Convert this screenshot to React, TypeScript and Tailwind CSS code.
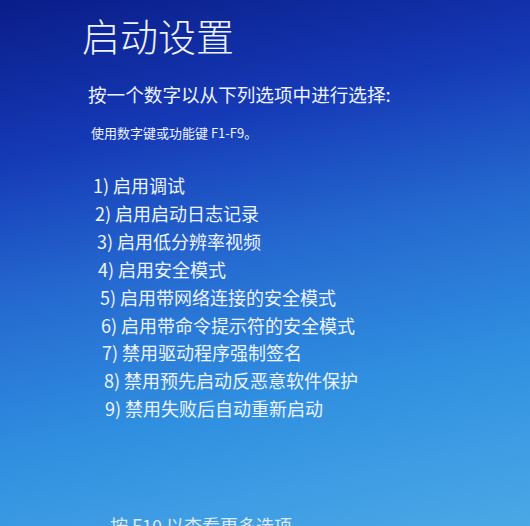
const options = [
  { label: '1) 启用调试', indent: 'ml-[93px]' },
  { label: '2) 启用启动日志记录', indent: 'ml-[95px]' },
  { label: '3) 启用低分辨率视频', indent: 'ml-[97px]' },
  { label: '4) 启用安全模式', indent: 'ml-[98px]' },
  { label: '5) 启用带网络连接的安全模式', indent: 'ml-[100px]' },
  { label: '6) 启用带命令提示符的安全模式', indent: 'ml-[101px]' },
  { label: '7) 禁用驱动程序强制签名', indent: 'ml-[102px]' },
  { label: '8) 禁用预先启动反恶意软件保护', indent: 'ml-[104px]' },
  { label: '9) 禁用失败后自动重新启动', indent: 'ml-[105px]' },
];

export default function App() {
  return (
    <div className="h-[526px] w-full overflow-hidden bg-[linear-gradient(168deg,#0a1d88_0%,#1539b6_25%,#256ad0_48%,#3090e0_72%,#4aa8e6_100%)] font-['Noto_Sans_CJK_SC',sans-serif] text-[#eef4ff]">
      <div className="flex flex-col pt-[15px]">
        <h1 className="ml-[82px] text-[38px] leading-[40px] font-light">启动设置</h1>
        <p className="ml-[88px] mt-[29px] text-[18.6px] leading-[20px]">按一个数字以从下列选项中进行选择:</p>
        <p className="ml-[91px] mt-[21px] text-[13px] leading-[16px]">使用数字键或功能键 F1-F9。</p>
        <ul className="mt-[31px] flex flex-col">
          {options.map((o) => (
            <li key={o.label} className={`${o.indent} text-[18px] leading-[27.9px]`}>
              {o.label}
            </li>
          ))}
        </ul>
        <p className="ml-[110px] mt-[92px] text-[18px] leading-[20px] text-[#dfe9f8]">按 F10 以查看更多选项</p>
      </div>
    </div>
  );
}
